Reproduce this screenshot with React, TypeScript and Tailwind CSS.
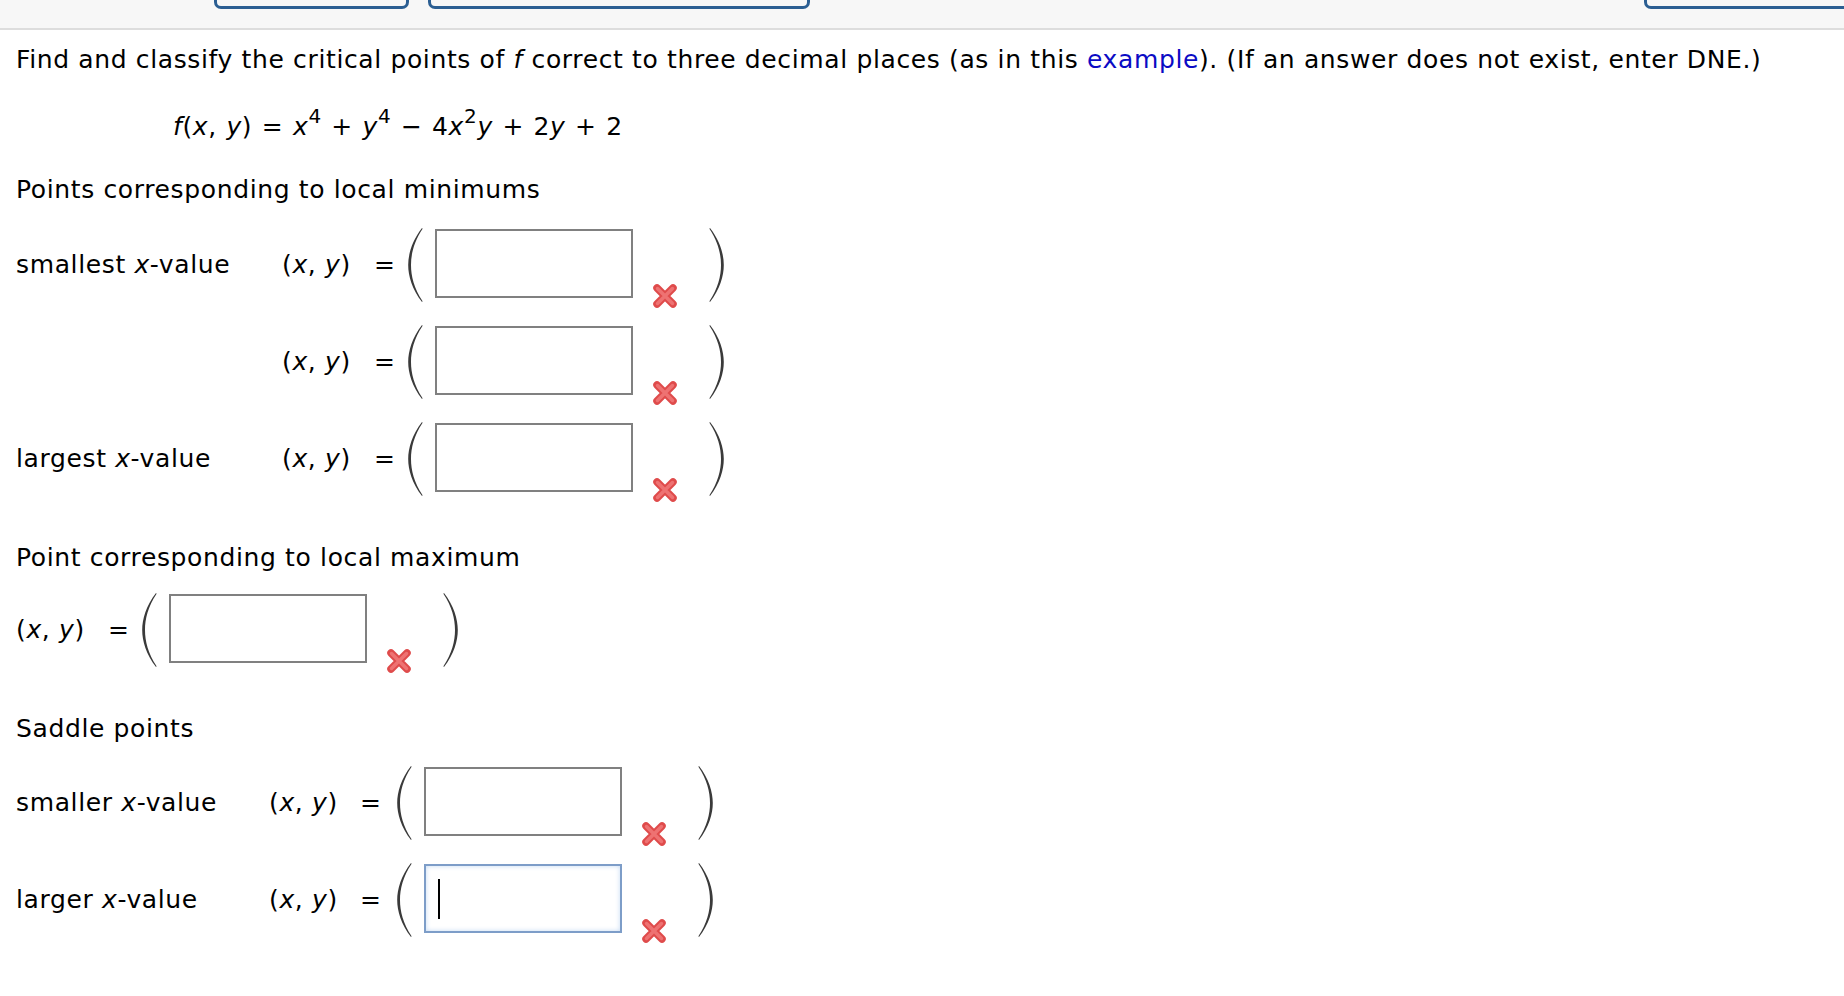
import React from "react";

function Paren({ side }: { side: "left" | "right" }) {
  const d =
    side === "left"
      ? "M15 1 C5 14 1.2 27 1.2 38 C1.2 49 5 62 15 75 L15.6 74.2 C7 61.5 4 49 4 38 C4 27 7 14.5 15.6 1.8 Z"
      : "M1 1 C11 14 14.8 27 14.8 38 C14.8 49 11 62 1 75 L0.4 74.2 C9 61.5 12 49 12 38 C12 27 9 14.5 0.4 1.8 Z";
  return (
    <svg width="16" height="76" viewBox="0 0 16 76" className="shrink-0">
      <path d={d} fill="#3a3a3a" />
    </svg>
  );
}

function WrongMark() {
  return (
    <svg width="26" height="26" viewBox="0 0 26 26" className="shrink-0">
      <g strokeLinecap="round">
        <path d="M5 5 L21 21 M21 5 L5 21" stroke="#df4b4b" strokeWidth="7.5" />
        <path d="M5.5 5.5 L20.5 20.5 M20.5 5.5 L5.5 20.5" stroke="#ee7272" strokeWidth="3.5" />
      </g>
    </svg>
  );
}

function Sup({ children }: { children: React.ReactNode }) {
  return <span className="relative top-[-12px] text-[20px] leading-none">{children}</span>;
}

function PointRow({
  label,
  labelWidth,
  eqWidth = 92,
  parenGap = 33,
  focused = false,
}: {
  label?: React.ReactNode;
  labelWidth?: number;
  eqWidth?: number;
  parenGap?: number;
  focused?: boolean;
}) {
  return (
    <div className="flex items-center h-[76px]">
      {label !== undefined && (
        <span className="shrink-0" style={{ width: labelWidth }}>
          {label}
        </span>
      )}
      <span className="shrink-0" style={{ width: eqWidth }}>
        (<i>x</i>, <i>y</i>)
      </span>
      <span className="shrink-0" style={{ width: parenGap }}>
        =
      </span>
      <div className="flex items-start h-[76px]">
        <Paren side="left" />
        {focused ? (
          <div className="ml-[12px] mt-[2px] w-[198px] h-[69px] bg-white border-2 border-[#7d9dc8] shadow-[inset_0_0_5px_#c6daf3] flex items-center">
            <div className="ml-[12px] w-[2px] h-[40px] bg-black" />
          </div>
        ) : (
          <div className="ml-[12px] mt-[2px] w-[198px] h-[69px] bg-white border-2 border-[#808080]" />
        )}
        <div className="ml-[19px] mt-[56px]">
          <WrongMark />
        </div>
        <div className="ml-[31px]">
          <Paren side="right" />
        </div>
      </div>
    </div>
  );
}

export default function App() {
  return (
    <div className="min-h-screen bg-white text-black font-['DejaVu_Sans',sans-serif] text-[25px] leading-[36px] tracking-[0.63px]">
      {/* top toolbar, only the button bottoms show */}
      <div className="h-[30px] bg-[#f7f7f7] border-b-2 border-[#dddddd] overflow-hidden flex items-start pl-[214px]">
        <div className="w-[195px] h-[9px] border-[3px] border-t-0 border-[#2b5e92] rounded-b-[7px]" />
        <div className="ml-[19px] w-[382px] h-[9px] border-[3px] border-t-0 border-[#2b5e92] rounded-b-[7px]" />
        <div className="ml-auto -mr-[30px] w-[230px] h-[9px] border-[3px] border-t-0 border-[#2b5e92] rounded-b-[7px]" />
      </div>

      <div className="px-[16px]">
        <p className="mt-[12px]">
          Find and classify the critical points of <i>f</i> correct to three decimal places (as in this{" "}
          <span className="text-[#0b0bc4]">example</span>). (If an answer does not exist, enter DNE.)
        </p>

        <p className="mt-[31px] pl-[157px] [word-spacing:1px]">
          <i>f</i>(<i>x</i>, <i>y</i>) = <i>x</i>
          <Sup>4</Sup> + <i>y</i>
          <Sup>4</Sup> − 4<i>x</i>
          <Sup>2</Sup>
          <i>y</i> + 2<i>y</i> + 2
        </p>

        <p className="mt-[27px]">Points corresponding to local minimums</p>

        <div className="mt-[19px] flex flex-col gap-[21px]">
          <PointRow
            labelWidth={266}
            label={
              <>
                smallest <i>x</i>-value
              </>
            }
          />
          <PointRow labelWidth={266} label="" />
          <PointRow
            labelWidth={266}
            label={
              <>
                largest <i>x</i>-value
              </>
            }
          />
        </div>

        <p className="mt-[43px]">Point corresponding to local maximum</p>

        <div className="mt-[16px]">
          <PointRow />
        </div>

        <p className="mt-[43px]">Saddle points</p>

        <div className="mt-[18px] flex flex-col gap-[21px]">
          <PointRow
            labelWidth={253}
            eqWidth={91}
            parenGap={36}
            label={
              <>
                smaller <i>x</i>-value
              </>
            }
          />
          <PointRow
            labelWidth={253}
            eqWidth={91}
            parenGap={36}
            focused
            label={
              <>
                larger <i>x</i>-value
              </>
            }
          />
        </div>
      </div>
    </div>
  );
}
